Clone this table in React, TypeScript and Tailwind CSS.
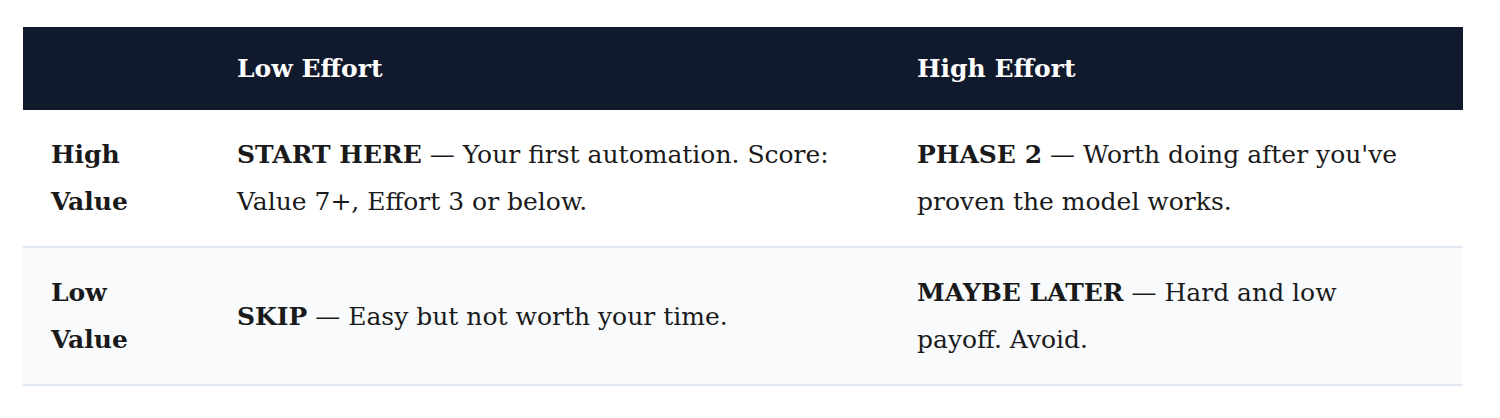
import React from 'react';

type Row = {
  label: string;
  low: { tag: string; text: string };
  high: { tag: string; text: string };
};

const rows: Row[] = [
  {
    label: 'High Value',
    low: { tag: 'START HERE', text: 'Your first automation. Score: Value 7+, Effort 3 or below.' },
    high: { tag: 'PHASE 2', text: "Worth doing after you've proven the model works." },
  },
  {
    label: 'Low Value',
    low: { tag: 'SKIP', text: 'Easy but not worth your time.' },
    high: { tag: 'MAYBE LATER', text: 'Hard and low payoff. Avoid.' },
  },
];

export default function App(): JSX.Element {
  return (
    <div className="w-[1500px] h-[418px] bg-white pt-[27px] px-[23px] font-['DejaVu_Serif',serif] text-[25px] leading-[47px] text-[#1a1a1a]">
      <table className="w-[1440px] table-fixed border-collapse">
        <colgroup>
          <col className="w-[186px]" />
          <col className="w-[680px]" />
          <col className="w-[574px]" />
        </colgroup>
        <thead>
          <tr className="bg-[#111a2d] text-white">
            <th className="px-[28px] py-[18px] text-left font-bold"></th>
            <th className="px-[28px] py-[18px] text-left font-bold">Low Effort</th>
            <th className="px-[28px] py-[18px] text-left font-bold">High Effort</th>
          </tr>
        </thead>
        <tbody>
          {rows.map((row, i) => (
            <tr
              key={row.label}
              className={`border-b-2 border-[#e2e8f0] ${i % 2 === 1 ? 'bg-[#f8fafc]' : 'bg-white'}`}
            >
              <td className="px-[28px] py-[21px] align-middle font-bold">{row.label}</td>
              <td className="px-[28px] py-[21px] align-middle">
                <strong>{row.low.tag}</strong> — {row.low.text}
              </td>
              <td className="pl-[28px] pr-[60px] py-[21px] align-middle">
                <strong>{row.high.tag}</strong> — {row.high.text}
              </td>
            </tr>
          ))}
        </tbody>
      </table>
    </div>
  );
}
